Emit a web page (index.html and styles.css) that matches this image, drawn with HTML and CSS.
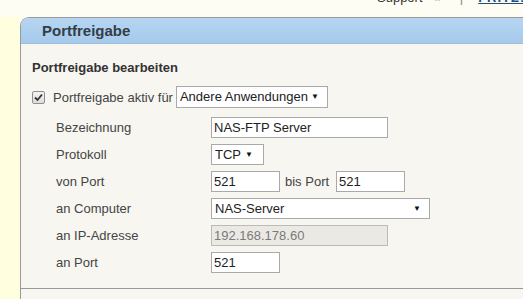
FILE: index.html
```html
<!DOCTYPE html>
<html lang="de">
<head>
    <meta charset="UTF-8">
    <meta name="viewport" content="width=device-width, initial-scale=1.0">
    <title>Portfreigabe</title>
    <link rel="stylesheet" href="styles.css">
</head>
<body>
    <div class="topbar">
        <div class="toplinks">
            <span class="toplink">Support</span>
            <span class="topmark">»</span>
            <span class="topsep">|</span>
            <a class="topbrand" href="#">FRITZ!NAS</a>
        </div>
    </div>

    <div class="page">
        <div class="gutter"></div>
        <div class="panel">
            <div class="panel-head">
                <h1>Portfreigabe</h1>
            </div>
            <div class="panel-body">
                <h2>Portfreigabe bearbeiten</h2>

                <div class="active-row">
                    <span class="checkbox">
                        <svg width="9" height="9" viewBox="0 0 9 9"><path d="M1 4.5 L3.5 7 L8 1.5" fill="none" stroke="#333" stroke-width="1.8"/></svg>
                    </span>
                    <span class="active-label">Portfreigabe aktiv für</span>
                    <span class="select select-app">Andere Anwendungen</span>
                </div>

                <div class="rows">
                    <label>Bezeichnung</label>
                    <div><input type="text" class="field field-wide" value="NAS-FTP Server"></div>

                    <label>Protokoll</label>
                    <div><span class="select select-proto">TCP</span></div>

                    <label>von Port</label>
                    <div class="port-range">
                        <input type="text" class="field field-port" value="521">
                        <span class="bis">bis Port</span>
                        <input type="text" class="field field-port" value="521">
                    </div>

                    <label>an Computer</label>
                    <div><span class="select select-pc">NAS-Server</span></div>

                    <label>an IP-Adresse</label>
                    <div><input type="text" class="field field-wide" value="192.168.178.60" disabled></div>

                    <label>an Port</label>
                    <div><input type="text" class="field field-port" value="521"></div>
                </div>

                <div class="divider"></div>
            </div>
        </div>
    </div>
</body>
</html>
```

FILE: styles.css
```css
body {
    margin: 0;
    padding: 0;
    font-family: 'Liberation Sans', Arial, sans-serif;
    background-color: #fdfdf4;
    color: #444;
    overflow: hidden;
}

.topbar {
    height: 17px;
    overflow: hidden;
}

.toplinks {
    display: flex;
    align-items: baseline;
    white-space: nowrap;
    margin-top: -10px;
    padding-left: 377px;
    font-size: 13px;
    line-height: 15px;
}

.toplink {
    color: #333;
}

.topmark {
    color: #bbb;
    margin-left: 12px;
}

.topsep {
    color: #888;
    margin-left: 18px;
}

.topbrand {
    color: #1f4f7f;
    margin-left: 15px;
    font-weight: bold;
    letter-spacing: 1px;
    text-decoration: underline;
}

.page {
    display: flex;
}

.gutter {
    width: 20px;
    flex-shrink: 0;
    background-color: #ffffe0;
}

.panel {
    flex: 1;
    border-top: 1px solid #999;
    border-left: 1px solid #999;
    border-top-left-radius: 9px;
    background-color: #f7f6f1;
    overflow: hidden;
}

.panel-head {
    height: 25px;
    background: linear-gradient(#b6d5f1, #a6caec);
    border-bottom: 1px solid #a3bdd6;
    padding-left: 21px;
}

h1 {
    margin: 0;
    font-size: 15px;
    line-height: 25px;
    color: #333d48;
}

.panel-body {
    padding-top: 16px;
}

h2 {
    margin: 0 0 10px 11px;
    font-size: 13px;
    line-height: 16px;
    color: #333;
}

.active-row {
    display: flex;
    align-items: center;
    height: 22px;
    margin-left: 11px;
}

.checkbox {
    display: inline-flex;
    align-items: center;
    justify-content: center;
    width: 11px;
    height: 11px;
    border: 1px solid #8f8f8f;
    border-radius: 2px;
    background: linear-gradient(#f4f4f4, #dcdcdc);
}

.active-label {
    font-size: 13px;
    margin-left: 8px;
    margin-right: 3px;
}

.select {
    position: relative;
    display: inline-block;
    box-sizing: border-box;
    height: 21px;
    line-height: 19px;
    padding-left: 3px;
    border: 1px solid #a9a9a9;
    background-color: #fff;
    color: #222;
    font-size: 13px;
}

.select::after {
    content: "\25BC";
    position: absolute;
    right: 8px;
    top: 0;
    font-size: 8px;
    color: #111;
}

.select-app {
    width: 152px;
    height: 22px;
    line-height: 20px;
}

.select-proto {
    width: 53px;
}

.select-proto::after {
    right: 10px;
}

.select-pc {
    width: 219px;
}

.rows {
    display: grid;
    grid-template-columns: 155px auto;
    row-gap: 6px;
    align-items: center;
    margin: 9px 0 0 35px;
}

.rows label {
    font-size: 13px;
    color: #444;
}

.rows > div {
    display: flex;
    align-items: center;
    height: 21px;
}

.field {
    box-sizing: border-box;
    height: 21px;
    margin: 0;
    padding: 0 2px;
    border: 1px solid #a9a9a9;
    background-color: #fff;
    color: #222;
    font-family: 'Liberation Sans', Arial, sans-serif;
    font-size: 13px;
    outline: none;
}

.field:disabled {
    background-color: #ebe9e4;
    border-color: #bdbbb7;
    color: #7a7a7a;
}

.field-wide {
    width: 177px;
}

.field-port {
    width: 69px;
}

.bis {
    font-size: 13px;
    margin: 0 7px 0 5px;
}

.divider {
    margin-top: 15px;
    border-top: 1px solid #999;
    height: 20px;
}
```
